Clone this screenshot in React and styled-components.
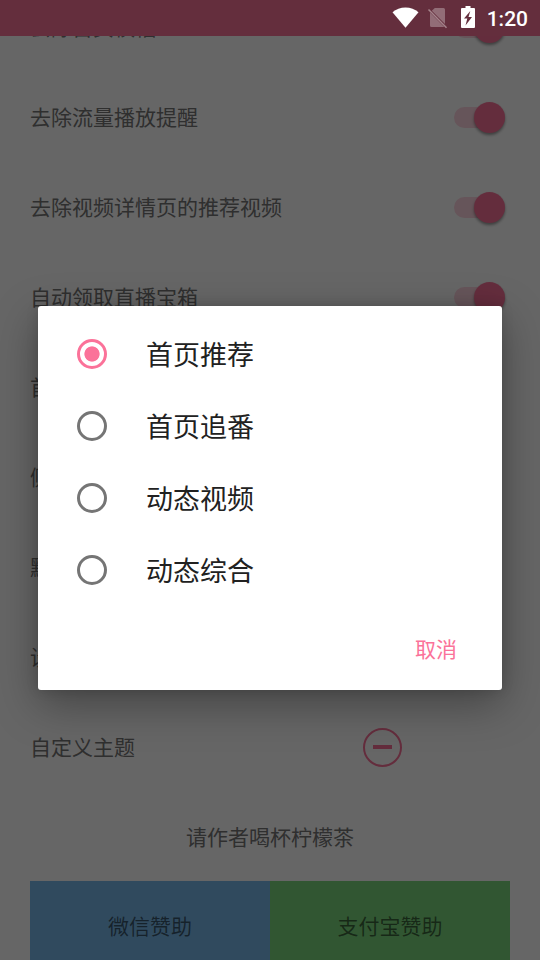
import React, { useState } from "react";
import styled, { createGlobalStyle } from "styled-components";

const settings = [
  { label: "去除首页横幅", toggle: true },
  { label: "去除流量播放提醒", toggle: true },
  { label: "去除视频详情页的推荐视频", toggle: true },
  { label: "自动领取直播宝箱", toggle: true },
  { label: "首页默认标签" },
  { label: "侧边栏设置" },
  { label: "默认启动页" },
  { label: "设置播放器" },
  { label: "自定义主题", theme: true },
];

const options = ["首页推荐", "首页追番", "动态视频", "动态综合"];

const StatusIcons = () => (
  <StatusSvg width="84" height="36" viewBox="392 0 84 36">
    <path
      d="M392.5 12.3C396 9.2 400.500 7.500 405.500 7.500s9.500 1.700 13 4.800L405.500 27.700z"
      fill="#fff"
    />
    <path
      d="M434.800 8H443.500a1.500 1.500 0 0 1 1.500 1.500V24L431.800 10.800zM430 12.500L444.300 27H431.500a1.500 1.500 0 0 1-1.500-1.500z"
      fill="#fff"
      opacity="0.3"
    />
    <path d="M428.500 9.500L446.500 27.800" stroke="#a5848c" strokeWidth="1.500" />
    <path
      fillRule="evenodd"
      d="M465.500 6h5v2H474q1 0 1 1v18q0 1-1 1H462q-1 0-1-1V9q0-1 1-1h3.500zM470.300 11L464 18.500h3.300l-1.800 7 6.500-8.500h-3.500z"
      fill="#fff"
    />
  </StatusSvg>
);

const SettingRow = ({ label, toggle, theme }) => (
  <Row>
    <RowLabel>{label}</RowLabel>
    {toggle && (
      <SwitchTrack>
        <SwitchThumb />
      </SwitchTrack>
    )}
    {theme && (
      <ThemeCircle>
        <ThemeDash />
      </ThemeCircle>
    )}
  </Row>
);

const App = () => {
  const [selected, setSelected] = useState(0);

  return (
    <Screen>
      <GlobalStyle />
      <Page>
        <List>
          {settings.map((item) => (
            <SettingRow key={item.label} {...item} />
          ))}
        </List>
        <DonateTitle>请作者喝杯柠檬茶</DonateTitle>
        <DonateButtons>
          <DonateButton $color="#79b9ea">微信赞助</DonateButton>
          <DonateButton $color="#7cd77e">支付宝赞助</DonateButton>
        </DonateButtons>
      </Page>
      <Scrim>
        <StatusBar>
          <StatusIcons />
          <Clock>1:20</Clock>
        </StatusBar>
        <Dialog>
          {options.map((option, index) => (
            <Option key={option} onClick={() => setSelected(index)}>
              <Radio $checked={index === selected} />
              <OptionLabel>{option}</OptionLabel>
            </Option>
          ))}
          <Actions>
            <CancelButton>取消</CancelButton>
          </Actions>
        </Dialog>
      </Scrim>
    </Screen>
  );
};

const GlobalStyle = createGlobalStyle`
  * {
    box-sizing: border-box;
  }

  body {
    margin: 0;
    overflow: hidden;
    font-family: Roboto, "Noto Sans CJK SC", sans-serif;
  }
`;

const Screen = styled.div`
  position: relative;
  width: 540px;
  height: 960px;
  overflow: hidden;
  background: #fff;
`;

const Page = styled.div`
  height: 960px;
  padding: 0 30px;
  overflow: hidden;
`;

const List = styled.div`
  margin-top: -18px;
`;

const Row = styled.div`
  display: flex;
  align-items: center;
  justify-content: space-between;
  height: 90px;
`;

const RowLabel = styled.div`
  padding-top: 2px;
  font-size: 21px;
  line-height: 30px;
  color: #757575;
`;

const SwitchTrack = styled.div`
  display: flex;
  align-items: center;
  justify-content: flex-end;
  width: 51px;
  height: 21px;
  margin-right: 5px;
  border-radius: 11px;
  background: rgba(251, 114, 153, 0.3);
`;

const SwitchThumb = styled.div`
  flex: none;
  width: 31px;
  height: 31px;
  border-radius: 50%;
  background: #fb7299;
  box-shadow: 0 2px 3px rgba(0, 0, 0, 0.4);
`;

const ThemeCircle = styled.div`
  display: flex;
  align-items: center;
  justify-content: center;
  width: 39px;
  height: 39px;
  margin-right: 108px;
  border: 2px solid #fb7299;
  border-radius: 50%;
`;

const ThemeDash = styled.div`
  width: 19px;
  height: 4px;
  background: #fb7299;
`;

const DonateTitle = styled.div`
  height: 89px;
  padding-top: 1px;
  font-size: 21px;
  line-height: 90px;
  text-align: center;
  color: #757575;
`;

const DonateButtons = styled.div`
  display: flex;
`;

const DonateButton = styled.div`
  flex: 1;
  height: 92px;
  font-size: 21px;
  line-height: 92px;
  text-align: center;
  color: rgba(0, 0, 0, 0.54);
  background: ${({ $color }) => $color};
`;

const Scrim = styled.div`
  position: absolute;
  inset: 0;
  background: rgba(0, 0, 0, 0.6);
`;

const StatusBar = styled.div`
  display: flex;
  align-items: center;
  justify-content: flex-end;
  height: 36px;
  padding-right: 12px;
  background: #642e3d;
`;

const StatusSvg = styled.svg`
  margin-right: 11px;
`;

const Clock = styled.div`
  padding-top: 2px;
  font-size: 21px;
  font-weight: 500;
  color: #fff;
`;

const Dialog = styled.div`
  width: 464px;
  height: 384px;
  margin: 270px auto 0;
  padding-top: 12px;
  border-radius: 3px;
  background: #fff;
  box-shadow: 0 14px 44px rgba(0, 0, 0, 0.34), 0 0 12px rgba(0, 0, 0, 0.15);
`;

const Option = styled.div`
  display: flex;
  align-items: center;
  height: 72px;
  padding-left: 39px;
`;

const OptionLabel = styled.div`
  padding-bottom: 1px;
  font-size: 27px;
  color: #212121;
`;

const Radio = styled.div`
  width: 30px;
  height: 30px;
  margin-right: 39px;
  border: 3px solid ${({ $checked }) => ($checked ? "#fb7299" : "#757575")};
  border-radius: 50%;
  background: ${({ $checked }) =>
    $checked
      ? "radial-gradient(circle, #fb7299 7.2px, transparent 8px)"
      : "none"};
`;

const Actions = styled.div`
  display: flex;
  justify-content: flex-end;
  padding: 17px 33px 0 0;
`;

const CancelButton = styled.div`
  padding: 12px;
  font-size: 21px;
  line-height: 30px;
  color: #fb7299;
`;

export default App;
